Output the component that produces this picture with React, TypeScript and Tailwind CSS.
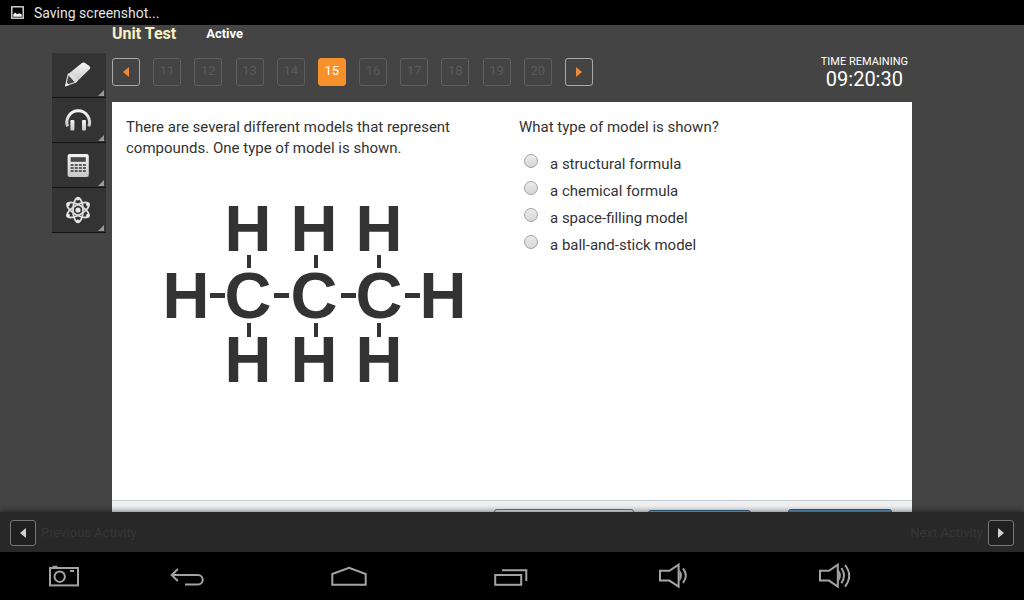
import type { ReactNode } from "react";
import clsx from "clsx";

const questions = [11, 12, 13, 14, 15, 16, 17, 18, 19, 20];
const current = 15;

const answers = [
  "a structural formula",
  "a chemical formula",
  "a space-filling model",
  "a ball-and-stick model",
];

const StatusBar = () => (
  <div className="flex h-[25px] shrink-0 items-center gap-[10px] bg-black pl-[11px] text-sm text-[#e4e4e4]">
    <svg className="size-[13px]" viewBox="0 0 13 13" aria-hidden="true">
      <rect x="0.8" y="0.8" width="11.4" height="11.4" fill="none" stroke="#ddd" strokeWidth="1.4" />
      <path d="M2.2 10.8V8.4l1.8-1.8 2 1.7 2.6-1.1 2.2 1.2v2.4Z" fill="#eee" />
    </svg>
    <span className="leading-[22px]">Saving screenshot...</span>
  </div>
);

const PencilIcon = () => (
  <svg className="size-7" viewBox="0 0 28 28" aria-hidden="true">
    <path d="M4.4 13 17.6 2.2Q19 1 20.6 1.8L25.4 5Q27 6.3 25.8 8L12 21.4Z" fill="url(#metal)" />
    <path d="M4.2 13.2 11.6 21.3 1.6 24.8Z" fill="#444" stroke="#dcdcdc" strokeWidth="1.2" strokeLinejoin="round" />
    <path d="M4.4 13 12 21.4 14 19.4 6.4 11.4Z" fill="#e0e0e0" />
    <path d="M2.6 21.2 5.2 24 1 25.4Z" fill="#eee" />
  </svg>
);

const HeadphonesIcon = () => (
  <svg className="size-7" viewBox="0 0 28 28" aria-hidden="true">
    <path d="M3.6 20.4A11.4 11.4 0 1 1 24.8 20.4" fill="none" stroke="url(#metal)" strokeWidth="3" />
    <rect x="6.4" y="14" width="4" height="10.4" rx="1" fill="url(#metal)" />
    <rect x="18" y="14" width="4" height="10.4" rx="1" fill="url(#metal)" />
  </svg>
);

const CalculatorIcon = () => (
  <svg className="size-7" viewBox="0 0 28 28" aria-hidden="true">
    <rect x="3.6" y="3" width="21.2" height="23" rx="2" fill="url(#metal)" />
    <rect x="6.6" y="6.2" width="15.2" height="4.6" fill="#484848" />
    {[13, 16, 19].map((y) =>
      [6.6, 10.7, 14.8, 18.9].map((x) => (
        <rect key={`${x}-${y}`} x={x} y={y} width="3" height="2" fill="#5c5c5c" />
      ))
    )}
  </svg>
);

const AtomIcon = () => (
  <svg className="size-7" viewBox="0 0 28 28" aria-hidden="true">
    <g fill="none" stroke="#dedede" strokeWidth="1.8">
      {[30, 90, 150].map((angle) => (
        <ellipse key={angle} cx="14" cy="14" rx="12.2" ry="5" transform={`rotate(${angle} 14 14)`} />
      ))}
    </g>
    <g fill="#e6e6e6">
      {[30, 90, 150, 210, 270, 330].map((angle) => (
        <circle key={angle} cx="25.4" cy="14" r="1.9" transform={`rotate(${angle} 14 14)`} />
      ))}
      <circle cx="14" cy="14" r="2.6" />
    </g>
  </svg>
);

const Tool = ({ label, children }: { label: string; children: ReactNode }) => (
  <button
    aria-label={label}
    className="relative flex h-[45px] w-full items-center justify-center border-b border-[#141414] bg-[#333] pr-[2px]"
  >
    {children}
    <svg className="absolute right-[2px] bottom-px size-[6px]" viewBox="0 0 6 6" aria-hidden="true">
      <path d="M6 0V6H0Z" fill="#999" />
    </svg>
  </button>
);

const Toolbox = () => (
  <aside className="mt-[28px] mr-[6px] ml-auto w-[54px]">
    <Tool label="Highlighter">
      <PencilIcon />
    </Tool>
    <Tool label="Audio">
      <HeadphonesIcon />
    </Tool>
    <Tool label="Calculator">
      <CalculatorIcon />
    </Tool>
    <Tool label="Periodic table">
      <AtomIcon />
    </Tool>
  </aside>
);

const Arrow = ({ left, fill }: { left?: boolean; fill: string }) => (
  <svg className="h-[10px] w-[6px]" viewBox="0 0 6 10" aria-hidden="true">
    <path d={left ? "M6 0V10L0 5Z" : "M0 0V10L6 5Z"} fill={fill} />
  </svg>
);

const PageArrow = ({ left }: { left?: boolean }) => (
  <button
    aria-label={left ? "Previous question" : "Next question"}
    className="flex size-7 items-center justify-center rounded-[3px] border border-[#a8a8a8]"
  >
    <Arrow left={left} fill="#ee8a3c" />
  </button>
);

const Header = () => (
  <header>
    <div className="flex items-center gap-[30px] leading-[18px] font-bold">
      <h1 className="text-base leading-[18px] text-[#fbf0c4]">Unit Test</h1>
      <span className="text-[13px] text-white">Active</span>
    </div>
    <div className="flex h-[59px] items-start justify-between pt-[12px] pr-1">
      <nav className="mt-[3px] flex w-[481px] justify-between text-[13px]">
        <PageArrow left />
        {questions.map((n) => (
          <button
            key={n}
            className={clsx(
              "size-7 rounded-[3px] border pb-[2px]",
              n === current
                ? "border-[#f7902b] bg-[#f7902b] text-white"
                : "border-[#5e5e5e] text-[#5a5a5a]"
            )}
          >
            {n}
          </button>
        ))}
        <PageArrow />
      </nav>
      <div className="text-center text-white">
        <div className="text-[11px] leading-[14px]">TIME REMAINING</div>
        <div className="text-xl leading-[20px]">09:20:30</div>
      </div>
    </div>
  </header>
);

const Atom = ({ x, y, children }: { x: number; y: number; children: string }) => (
  <text x={x} y={y} textAnchor="middle">
    {children}
  </text>
);

const Propane = () => (
  <svg
    className="mt-[31px] h-auto w-[379px] max-w-full font-['Liberation_Sans',Arial,sans-serif] text-[65px] font-bold"
    viewBox="0 0 379 210"
    fill="#333"
    role="img"
    aria-label="Propane"
  >
    {[122, 188, 253].map((x) => (
      <g key={x}>
        <Atom x={x} y={61}>H</Atom>
        <Atom x={x} y={128}>C</Atom>
        <Atom x={x} y={192}>H</Atom>
      </g>
    ))}
    <Atom x={60} y={128}>H</Atom>
    <Atom x={317} y={128}>H</Atom>
    {[121, 188, 251].map((x) => (
      <g key={x}>
        <rect x={x} y="65" width="4" height="13" />
        <rect x={x} y="133" width="4" height="14" />
      </g>
    ))}
    {[84, 148, 215, 279].map((x) => (
      <rect key={x} x={x} y="103" width="15" height="5" />
    ))}
  </svg>
);

const Question = () => (
  <div className="grid min-h-0 flex-1 grid-cols-2 gap-[14px] px-[14px] pt-[15px] text-[15px] leading-[21px] text-[#333]">
    <div>
      <p>There are several different models that represent compounds. One type of model is shown.</p>
      <Propane />
    </div>
    <fieldset>
      <legend>What type of model is shown?</legend>
      <div className="mt-[13px] flex flex-col">
        {answers.map((answer) => (
          <label key={answer} className="flex h-[27px] items-start gap-[12px] pl-[5px]">
            <input
              type="radio"
              name="answer"
              className="mt-[3px] size-[14px] appearance-none rounded-full border border-[#a3a3a3] bg-linear-to-b from-[#ececec] to-[#d6d6d6] checked:border-4 checked:border-[#333]"
            />
            <span className="leading-[27px]">{answer}</span>
          </label>
        ))}
      </div>
    </fieldset>
  </div>
);

const Actions = () => (
  <div className="flex h-[12px] shrink-0 items-start justify-end overflow-hidden border-t border-[#c3ccd2] bg-[#f1f1f1] pt-[8px] pr-5">
    <button aria-label="Mark this and return" className="h-8 w-[140px] rounded-[3px] border border-[#777] bg-[#eee]" />
    <button aria-label="Save and exit" className="ml-[14px] mt-px h-8 w-[103px] rounded-[3px] border border-[#2c648c] bg-[#7fb0d2]" />
    <button aria-label="Next" className="ml-[37px] h-8 w-[104px] rounded-[3px] border border-[#2c648c] bg-[#5b9bc8]" />
  </div>
);

const ActivityButton = ({ left }: { left?: boolean }) => (
  <button
    className={clsx("flex items-center gap-[5px] text-[13px] text-[#363636]", !left && "flex-row-reverse")}
  >
    <span className="flex size-[26px] items-center justify-center rounded-[3px] border border-[#777] bg-[#202020]">
      <Arrow left={left} fill="#d0d0d0" />
    </span>
    {left ? "Previous Activity" : "Next Activity"}
  </button>
);

const NavButton = ({ label, children }: { label: string; children: ReactNode }) => (
  <button aria-label={label} className="flex flex-1 items-center justify-center">
    <svg
      className="h-7 w-9"
      viewBox="0 0 36 28"
      fill="none"
      stroke="#a3a3a3"
      strokeWidth="2"
      aria-hidden="true"
    >
      {children}
    </svg>
  </button>
);

const SystemNav = () => (
  <nav className="flex h-12 shrink-0 bg-black pr-[108px]">
    <div className="flex w-[106px] pl-[22px]">
      <NavButton label="Screenshot">
        <rect x="4" y="6" width="28" height="17.4" />
        <circle cx="13.7" cy="14.7" r="5.2" />
        <path d="M6.7 4.8H11.3M24 9H28" />
      </NavButton>
    </div>
    <NavButton label="Back">
      <path d="M2.7 13H29a4.7 4.7 0 0 1 0 9.4H16M8.8 7 2.7 13 8.8 19" />
    </NavButton>
    <NavButton label="Home">
      <path d="M1.3 22.8V12L18 5.8 34.7 12V22.8Z" />
    </NavButton>
    <NavButton label="Recent apps">
      <rect x="2.2" y="13" width="26" height="9.8" />
      <path d="M9 8.2H33.3V19" />
    </NavButton>
    <NavButton label="Volume down">
      <path d="M5 8.8H14.4L23.6 2.6V24.6L14.4 18.6H5Z" />
      <path d="M24.4 7.6Q29.4 13.6 24.4 19.6Z" fill="#a3a3a3" stroke="none" />
      <path d="M28 6.4Q33.6 13.6 28 20.8" />
    </NavButton>
    <NavButton label="Volume up">
      <path d="M3 8.8H12L20.8 2.6V24.6L12 18.6H3Z" />
      <path d="M21.4 7.6Q26.4 13.6 21.4 19.6Z" fill="#a3a3a3" stroke="none" />
      <path d="M24.4 6Q29.6 13.6 24.4 21.2M28 3Q36.4 13.6 28 24.6" />
    </NavButton>
  </nav>
);

export default function App() {
  return (
    <div className="flex h-screen flex-col bg-[#444] font-[Roboto,sans-serif]">
      <svg className="absolute size-0" aria-hidden="true">
        <linearGradient id="metal" x1="0" y1="0" x2="0" y2="1">
          <stop offset="0" stopColor="#f4f4f4" />
          <stop offset="1" stopColor="#c8c8c8" />
        </linearGradient>
      </svg>
      <StatusBar />
      <main className="grid min-h-0 flex-1 grid-cols-[112px_1fr_112px] overflow-hidden">
        <Toolbox />
        <div className="flex min-h-0 flex-col">
          <Header />
          <section className="flex min-h-0 flex-1 flex-col bg-white">
            <Question />
            <Actions />
          </section>
        </div>
      </main>
      <footer className="z-10 flex h-10 shrink-0 items-center justify-between bg-[#282828] px-[10px] pt-[2px] shadow-[0_-1px_6px_rgba(0,0,0,0.5)]">
        <ActivityButton left />
        <ActivityButton />
      </footer>
      <SystemNav />
    </div>
  );
}
